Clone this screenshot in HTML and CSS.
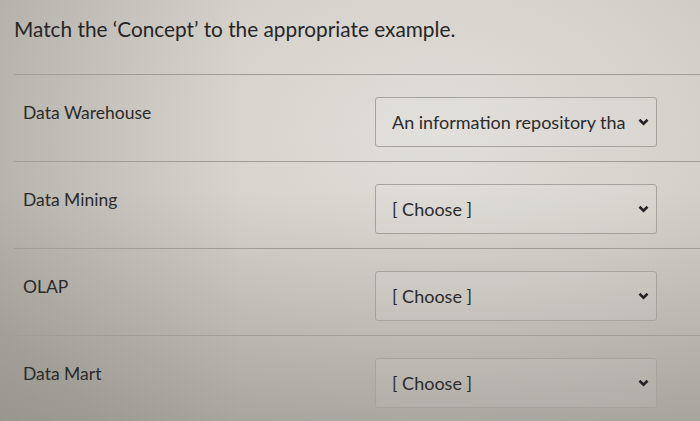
FILE: index.html
```html
<!DOCTYPE html>
<html>
<head>
<meta charset="utf-8">
<link rel="stylesheet" href="styles.css">
</head>
<body>
<div class="page">
  <h1 class="title">Match the ‘Concept’ to the appropriate example.</h1>
  <div class="rows">
    <div class="row">
      <div class="label">Data Warehouse</div>
      <div class="select"><span class="value">An information repository tha</span><svg class="chev" viewBox="0 0 12 8" width="11" height="8"><path d="M1.6 1.6 L6 5.8 L10.4 1.6" fill="none" stroke="#222" stroke-width="2.8"/></svg></div>
    </div>
    <div class="row">
      <div class="label">Data Mining</div>
      <div class="select"><span class="value">[ Choose ]</span><svg class="chev" viewBox="0 0 12 8" width="11" height="8"><path d="M1.6 1.6 L6 5.8 L10.4 1.6" fill="none" stroke="#222" stroke-width="2.8"/></svg></div>
    </div>
    <div class="row">
      <div class="label">OLAP</div>
      <div class="select"><span class="value">[ Choose ]</span><svg class="chev" viewBox="0 0 12 8" width="11" height="8"><path d="M1.6 1.6 L6 5.8 L10.4 1.6" fill="none" stroke="#222" stroke-width="2.8"/></svg></div>
    </div>
    <div class="row">
      <div class="label">Data Mart</div>
      <div class="select"><span class="value">[ Choose ]</span><svg class="chev" viewBox="0 0 12 8" width="11" height="8"><path d="M1.6 1.6 L6 5.8 L10.4 1.6" fill="none" stroke="#222" stroke-width="2.8"/></svg></div>
    </div>
  </div>
</div>
</body>
</html>
```

FILE: styles.css
```css
html, body {
  margin: 0;
  padding: 0;
  height: 100%;
}
body {
  font-family: Lato, "Liberation Sans", sans-serif;
  color: #2b2b2b;
  background:
    linear-gradient(to bottom, rgba(60,58,52,0) 45%, rgba(60,58,52,0.22) 100%),
    linear-gradient(to right, rgba(60,58,52,0.12) 0%, rgba(60,58,52,0) 35%),
    radial-gradient(ellipse 75% 85% at 62% 32%, #e0ded8 0%, #d6d3cc 45%, #c3c0b8 100%);
  overflow: hidden;
}
.page {
  padding: 0 0 0 14px;
}
.title {
  margin: 0;
  padding: 15px 0 0 0;
  font-size: 20.8px;
  font-weight: 400;
  line-height: 28px;
  height: 59px;
  color: #262626;
}
.row {
  display: flex;
  align-items: flex-start;
  border-top: 1.5px solid #a19e97;
  height: 87px;
  padding: 22px 0 0 9px;
  box-sizing: border-box;
}
.label {
  width: 352px;
  font-size: 17.5px;
  line-height: 20px;
  padding-top: 6px;
  color: #2a2a2a;
}
.select {
  width: 282px;
  height: 50px;
  box-sizing: border-box;
  border: 1.5px solid #a6a39c;
  border-radius: 3px;
  background: rgba(255,255,255,0.07);
  display: flex;
  align-items: center;
  justify-content: space-between;
  padding: 0 7px 0 16px;
  font-size: 18px;
}
.value {
  color: #2b2b2b;
}
.chev {
  display: block;
}
```
